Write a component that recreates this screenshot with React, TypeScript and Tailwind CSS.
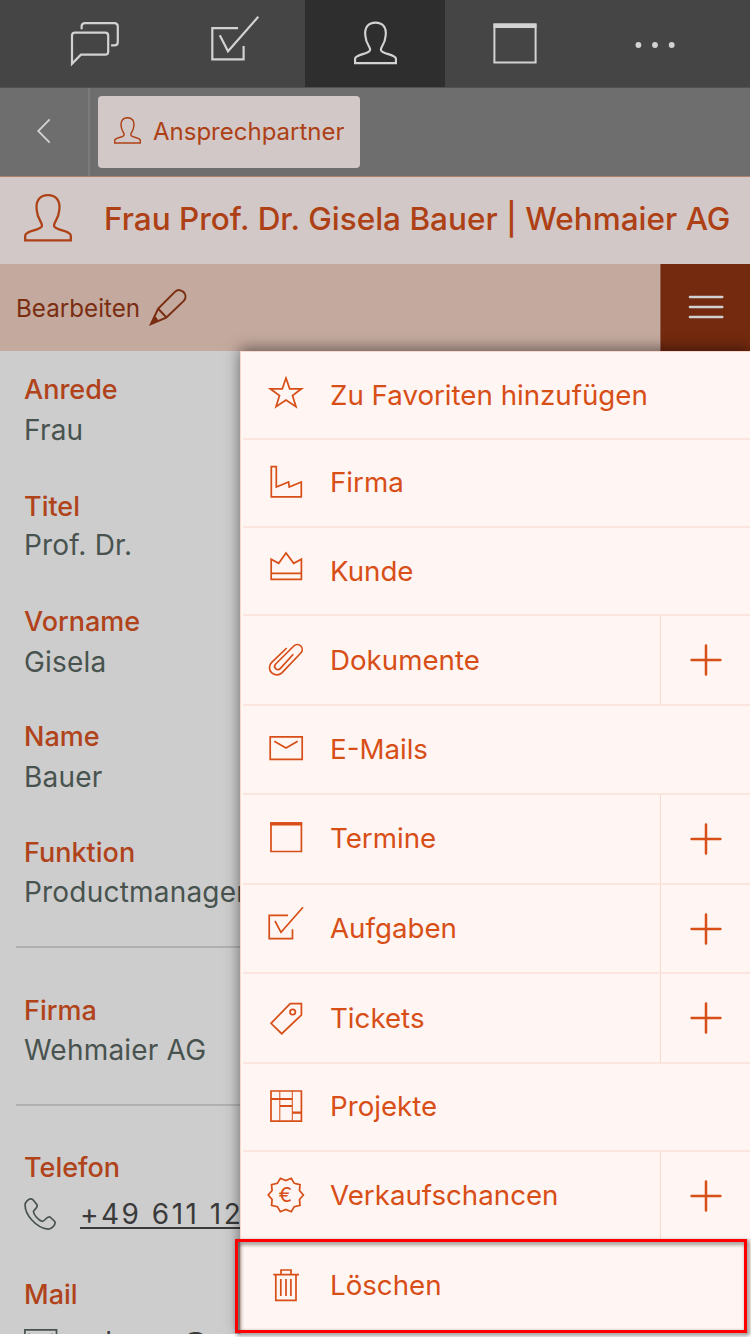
import type { ReactNode } from "react";

const PERSON =
  "M1.2 46.4V41.6C1.2 36.2 18 36.6 18 31.4C18 27.6 13.4 25.6 12.7 16C11.3 5.6 16.8 1.2 24 1.2C31.2 1.2 36.7 5.6 35.3 16C34.6 25.6 30 27.6 30 31.4C30 36.6 46.8 36.2 46.8 41.6V46.4Z";

function Person({ className, stroke }: { className: string; stroke: number }) {
  return (
    <svg viewBox="0 0 48 48" className={className} fill="none" stroke="currentColor" strokeWidth={stroke}>
      <path d={PERSON} />
    </svg>
  );
}

function NavCell({ active, children }: { active?: boolean; children: ReactNode }) {
  return (
    <div
      className={
        active
          ? "flex h-[87px] w-[140px] items-start justify-center bg-[#2e2e2e] pt-[14px]"
          : "flex h-[87px] w-[140px] items-start justify-center pt-[14px]"
      }
    >
      {children}
    </div>
  );
}

function TopNav() {
  return (
    <nav className="flex h-[88px] border-b border-[#515151] bg-[#454545] pl-[25px] text-[#d2d2d2]">
      <NavCell>
        <svg viewBox="65.400 14.300 60 60" className="size-[60px]" fill="none" stroke="currentColor" strokeWidth="2.200">
          <path d="M72.4 64V35.8Q72.4 32.9 75.3 32.9H105.6Q108.6 32.9 108.6 35.8V52Q108.6 55 105.6 55H81.3Z" />
          <path d="M82 29.5V26.8Q82 23.4 85.4 23.4H114.6Q118.2 23.4 118.2 26.8V42.2Q118.2 45.6 114.6 45.6H111.5" />
        </svg>
      </NavCell>
      <NavCell>
        <svg viewBox="205 14 60 60" className="size-[60px]" fill="none" stroke="currentColor" strokeWidth="2.200">
          <path d="M238 28.2H212.3V59.4H243.6V46" />
          <path d="M219.8 35.3L228 51.2L258.3 16.7" />
        </svg>
      </NavCell>
      <NavCell active>
        <Person className="mt-[7px] h-[44px] w-[43px]" stroke={2.4} />
      </NavCell>
      <NavCell>
        <svg viewBox="485 14 60 60" className="size-[60px]" fill="none" stroke="currentColor" strokeWidth="2">
          <path d="M494.4 24.5H535.6V62.6H494.4Z" />
          <path d="M493.6 25.8H536.4" strokeWidth="4.4" />
        </svg>
      </NavCell>
      <NavCell>
        <svg viewBox="625 14 60 60" className="size-[60px]" fill="currentColor">
          <circle cx="638.4" cy="45" r="2.9" />
          <circle cx="655" cy="45" r="2.9" />
          <circle cx="671.7" cy="45" r="2.9" />
        </svg>
      </NavCell>
    </nav>
  );
}

function TabBar() {
  return (
    <div className="flex h-[88px] bg-[#6e6e6e]">
      <div className="flex w-[90px] items-center justify-center border-r-2 border-[#7b7b7b] text-[#d2d2d2]">
        <svg viewBox="0 0 14 26" className="mt-[-2px] h-[26px] w-[14px]" fill="none" stroke="currentColor" strokeWidth="1.8">
          <path d="M12.7 1.3L1.2 13L12.7 24.7" />
        </svg>
      </div>
      <div className="mt-2 ml-2 flex h-[72px] w-[262px] items-center rounded-[4px] bg-[#d1c8c7] pl-4 text-[#ae4015]">
        <Person className="mt-[-3px] size-[27px]" stroke={2.6} />
        <span className="ml-3 text-[24px] leading-[70px]">Ansprechpartner</span>
      </div>
    </div>
  );
}

function TitleBar() {
  return (
    <div className="flex h-[88px] items-start border-t border-[#b07f6a] bg-[#d1c8c7] pl-[23.5px] text-[#ae4015]">
      <Person className="mt-[17px] size-[48px]" stroke={2.3} />
      <h1 className="ml-[32.5px] text-[31.5px] leading-[83px] font-medium whitespace-nowrap">
        Frau Prof. Dr. Gisela Bauer | Wehmaier AG
      </h1>
    </div>
  );
}

function ActionBar() {
  return (
    <div className="flex h-[87px] bg-[#c4a99e] text-[#7a2d11]">
      <div className="flex flex-1 items-start pl-4">
        <span className="text-[24.2px] leading-[90px]">Bearbeiten</span>
        <svg viewBox="147 286 40 42" className="mt-[22px] ml-[8px] h-[42px] w-[40px]" fill="none" stroke="currentColor" strokeWidth="2">
          <path d="M150 324L157.2 308.6L174.4 291.4C179.5 287 188 294.5 183 300.6L165.2 317.6Z" />
          <path d="M157.2 308.8L165.4 317.4" />
          <path d="M149.4 324.8L153 316.5Q156.5 316.5 157 321Z" fill="currentColor" stroke="none" />
        </svg>
      </div>
      <div className="flex w-[90px] items-start justify-center border-l border-[#93604d] bg-[#742a0f] pt-[31px] text-[#d0d0d0]">
        <svg viewBox="0 0 36 24" className="h-[24px] w-[36px]" stroke="currentColor" strokeWidth="2.6" strokeLinecap="round">
          <path d="M2 2H34.2M2 12H34.2M2 22H34.2" />
        </svg>
      </div>
    </div>
  );
}

function Field({ label, value, className, valueClass = "" }: { label: string; value: string; className: string; valueClass?: string }) {
  return (
    <div className={`pl-6 ${className}`}>
      <div className="text-[27px] leading-[40px] font-medium text-[#b0431a]">{label}</div>
      <div className={`text-[28px] leading-[40px] tracking-[0.2px] whitespace-nowrap text-[#48534f] ${valueClass}`}>{value}</div>
    </div>
  );
}

function Details() {
  return (
    <main className="h-[983px] overflow-hidden bg-[#cdcdcd] pt-[19px]">
      <Field label="Anrede" value="Frau" className="h-[117px]" />
      <Field label="Titel" value="Prof. Dr." className="h-[115px]" valueClass="-mt-[2px]" />
      <Field label="Vorname" value="Gisela" className="h-[115px]" />
      <Field label="Name" value="Bauer" className="h-[116px]" />
      <Field label="Funktion" value="Productmanager" className="h-[113px]" valueClass="-mt-px" />
      <div className="ml-4 h-[2px] bg-[#b0b0b0]" />
      <div className="h-[43px]" />
      <Field label="Firma" value="Wehmaier AG" className="h-[113px]" valueClass="-mt-px" />
      <div className="ml-4 h-[2px] bg-[#b0b0b0]" />
      <div className="h-[42px]" />
      <div className="h-[127px] pl-6">
        <div className="text-[27px] leading-[40px] font-medium text-[#b0431a]">Telefon</div>
        <div className="flex">
          <svg viewBox="24 1196 34 34" className="mt-[9px] size-[34px] text-[#48534f]" fill="none" stroke="currentColor" strokeWidth="1.7">
            <path d="M25.2 1202.5C27.5 1198.5 30.5 1196.5 33 1198.8L36.8 1203.5C38.6 1206.5 34.5 1208 33.4 1210.5C33.5 1213.5 38.5 1219.5 42.2 1220.4C45 1220.2 46.5 1215 50 1216L54.5 1220.2C57 1223.5 50.5 1228.5 48 1228.2C36.500 1227 24 1213.500 25.2 1202.5Z" />
          </svg>
          <span className="ml-[22px] mt-[7px] h-[34px] w-[160px] border-b-2 border-[#3a3a3a] text-[28px] leading-[38px] tracking-[2.5px] whitespace-nowrap text-[#3a3a3a]">
            +49 611 12
          </span>
        </div>
      </div>
      <div className="pl-6">
        <div className="text-[27px] leading-[40px] font-medium text-[#b0431a]">Mail</div>
        <div className="flex">
          <svg viewBox="0 0 34 26" className="mt-[14px] h-[26px] w-[34px] text-[#48534f]" fill="none" stroke="currentColor" strokeWidth="1.7">
            <path d="M0.900 0.900H32.500V24H0.900ZM4.500 5L16.600 12L28.700 5" />
          </svg>
          <span className="mt-[7px] ml-[22px] text-[28px] leading-[40px] text-[#3a3a3a]">g.bauer@</span>
        </div>
      </div>
    </main>
  );
}

function sealPoints() {
  return Array.from({ length: 20 }, (_, i) => {
    const r = i % 2 === 0 ? 17.6 : 14.4;
    const a = (i * Math.PI) / 10;
    return `${(21.8 + r * Math.cos(a)).toFixed(2)},${(23 + r * Math.sin(a)).toFixed(2)}`;
  }).join(" ");
}

const icons = {
  star: <path d="M22 6L25.700 16.800H37.500L28.500 23.600L32 34.800L22 28L12 34.800L15.500 23.600L6.200 16.800H18.300Z" />,
  factory: <path d="M7.300 6.700H12.300V27L24.600 22L25.200 27L37.300 22V36.800H7.300Z" />,
  crown: <path d="M7.200 11.200L14.700 15.300L22 4.900L29.700 15.300L37.400 11.200V31.300H7.200ZM7.200 25.400H37.400" />,
  clip: (
    <path d="M22.700 12L7.700 26.300A7.300 7.300 0 0 0 17.900 36.800L36.800 17A4.900 4.900 0 0 0 29.800 10L11.700 28A3.200 3.200 0 0 0 16.200 32.600L29.300 18.300" />
  ),
  mail: <path d="M6.200 10.900H38.200V33.300H6.200ZM10.300 15.300L22 22L33.700 15.300" />,
  calendar: (
    <>
      <path d="M7 8H37.400V36.500H7Z" />
      <path d="M6.300 8.800H38.100" strokeWidth="3.2" />
    </>
  ),
  task: <path d="M24 10.400H5.200V33.600H28.500V24.300M11 16L17 27.300L39 2.300" />,
  tag: (
    <>
      <path d="M7 29.300L26.200 9.700H37.400V21L17.700 39.700Z" />
      <circle cx="28.700" cy="18" r="2.700" />
    </>
  ),
  board: (
    <>
      <path d="M7 7H37.400V37.200H7Z" />
      <path d="M15.800 7V37M28.300 7V37" strokeWidth="1" />
      <path d="M7 15H28.300M15.800 22H28.300M28.300 28.700H37.400" strokeWidth="2.200" />
    </>
  ),
  seal: (
    <>
      <polygon points={sealPoints()} />
      <text x="21.300" y="30" textAnchor="middle" fontSize="20.500" fill="currentColor" stroke="none">
        €
      </text>
    </>
  ),
  trash: <path d="M9.300 13.700H35M17 13.700V9H27V13.700M11.800 13.700V39.400H32V13.700M16.800 18V35M22 18V35M26.900 18V35" />,
};

type Item = { icon: keyof typeof icons; label: string; height: string; leading: string; add?: boolean };

const items: Item[] = [
  { icon: "star", label: "Zu Favoriten hinzufügen", height: "h-[88px]", leading: "leading-[86px]" },
  { icon: "factory", label: "Firma", height: "h-[88px]", leading: "leading-[84px]" },
  { icon: "crown", label: "Kunde", height: "h-[88px]", leading: "leading-[86px]" },
  { icon: "clip", label: "Dokumente", height: "h-[90px]", leading: "leading-[88px]", add: true },
  { icon: "mail", label: "E-Mails", height: "h-[89px]", leading: "leading-[86px]" },
  { icon: "calendar", label: "Termine", height: "h-[90px]", leading: "leading-[86px]", add: true },
  { icon: "task", label: "Aufgaben", height: "h-[89px]", leading: "leading-[86px]", add: true },
  { icon: "tag", label: "Tickets", height: "h-[90px]", leading: "leading-[88px]", add: true },
  { icon: "board", label: "Projekte", height: "h-[88px]", leading: "leading-[84px]" },
  { icon: "seal", label: "Verkaufschancen", height: "h-[89px]", leading: "leading-[86px]", add: true },
  { icon: "trash", label: "Löschen", height: "h-[93px]", leading: "leading-[88px]" },
];

function MenuRow({ item }: { item: Item }) {
  return (
    <li className={`ml-[2px] flex border-b-2 border-[#fae5df] last:border-b-0 ${item.height}`}>
      <svg viewBox="0 0 44 44" className="mt-5 ml-[21px] size-[44px] shrink-0" fill="none" stroke="currentColor" strokeWidth="1.7">
        {icons[item.icon]}
      </svg>
      <span className={`ml-[22px] flex-1 text-[27.7px] whitespace-nowrap ${item.leading}`}>{item.label}</span>
      {item.add && (
        <span className="flex w-[90px] justify-center border-l border-[#f8d8ce]">
          <svg viewBox="0 0 32 32" className="mt-[28px] size-[32px]" stroke="currentColor" strokeWidth="2.500" strokeLinecap="round">
            <path d="M16 1.600V30.400M1.600 16H30.400" />
          </svg>
        </span>
      )}
    </li>
  );
}

export default function App() {
  return (
    <div className="h-[1337px] w-[751px] overflow-hidden bg-white font-['Inter',sans-serif]">
      <div className="relative h-[1334px] w-[750px]">
        <TopNav />
        <TabBar />
        <TitleBar />
        <ActionBar />
        <Details />
        <div className="absolute top-[351px] left-[240px] h-[983px] w-[510px]">
          <ul className="h-full border-t border-l border-[#f8d8ce] bg-[#fff5f2] text-[#d74e17] shadow-[0_-2px_14px_rgba(0,0,0,0.5)] [clip-path:inset(-20px_0_0_-20px)]">
            {items.map((item) => (
              <MenuRow key={item.label} item={item} />
            ))}
          </ul>
        </div>
        <div className="absolute top-[1239px] left-[235px] h-[94px] w-[512px] border-3 border-[#ff0000] drop-shadow-[2px_2px_2px_rgba(0,0,0,0.6)]" />
      </div>
    </div>
  );
}
